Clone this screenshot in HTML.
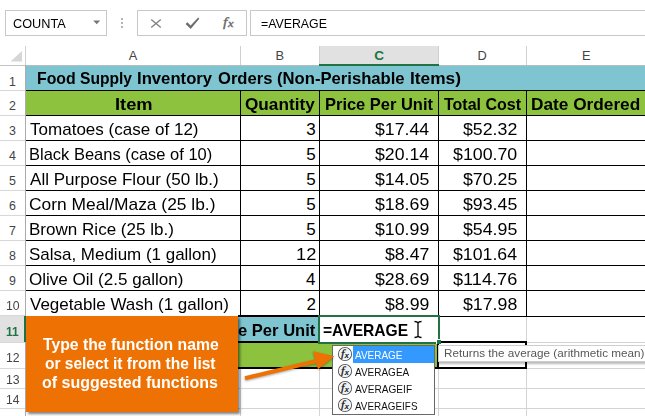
<!DOCTYPE html>
<html lang="en"><head><meta charset="utf-8"><title>Excel AVERAGE function</title>
<style>
html,body{margin:0;padding:0;background:#fff;}
body{width:645px;height:416px;position:relative;overflow:hidden;font-family:'Liberation Sans', sans-serif;}
.b{position:absolute;box-sizing:content-box;}
.t{position:absolute;white-space:nowrap;line-height:1;transform-origin:0 0;z-index:10;}
</style></head><body>
<div class="b" style="left:5px;top:10px;width:100px;height:24px;border:1px solid #C8C8C8;background:#fff"></div>
<div class="b" style="left:137px;top:10px;width:108px;height:24px;border:1px solid #C8C8C8;background:#fff"></div>
<div class="b" style="left:250px;top:10px;width:420px;height:24px;border:1px solid #C8C8C8;background:#fff"></div>
<svg class="b" style="left:92px;top:19px" width="10" height="7" viewBox="0 0 10 7"><path d="M1.2 1.5 L8.2 1.5 L4.7 5.2 Z" fill="#777"/></svg>
<div class="b" style="left:121.4px;top:18px;width:1.4px;height:1.5px;background:#B4B4B4;"></div>
<div class="b" style="left:121.4px;top:22px;width:1.4px;height:1.5px;background:#B4B4B4;"></div>
<div class="b" style="left:121.4px;top:26px;width:1.4px;height:1.5px;background:#B4B4B4;"></div>
<svg class="b" style="left:148px;top:15px" width="56" height="16" viewBox="148 15 56 16"><path d="M151.2 19.4 L160.8 27.6 M160.8 19.4 L151.2 27.6" stroke="#808080" stroke-width="1.3" fill="none"/><path d="M185.6 23.9 L187.4 22.3 L190.6 25.6 L198.2 17.6 L199.3 18.7 L190.7 28.9 Z" fill="#6e6e6e"/></svg>
<div class="b" style="left:319px;top:46px;width:120px;height:18px;background:#E1E1E1;"></div>
<div class="b" style="left:25px;top:46px;width:1px;height:19px;background:#D0D0D0;"></div>
<div class="b" style="left:240px;top:46px;width:1px;height:19px;background:#D0D0D0;"></div>
<div class="b" style="left:319px;top:46px;width:1px;height:19px;background:#D0D0D0;"></div>
<div class="b" style="left:438px;top:46px;width:1px;height:19px;background:#D0D0D0;"></div>
<div class="b" style="left:526px;top:46px;width:1px;height:19px;background:#D0D0D0;"></div>
<div class="b" style="left:0px;top:65px;width:26px;height:1px;background:#C4C4C4;"></div>
<svg class="b" style="left:10px;top:50px" width="13" height="12" viewBox="0 0 13 12"><path d="M12 1 L12 11.5 L0.5 11.5 Z" fill="#D6D6D6"/></svg>
<div class="b" style="left:25px;top:65px;width:1px;height:351px;background:#ABABAB;"></div>
<div class="b" style="left:0px;top:90px;width:25px;height:1px;background:#D8D8D8;"></div>
<div class="b" style="left:0px;top:115px;width:25px;height:1px;background:#D8D8D8;"></div>
<div class="b" style="left:0px;top:140px;width:25px;height:1px;background:#D8D8D8;"></div>
<div class="b" style="left:0px;top:165px;width:25px;height:1px;background:#D8D8D8;"></div>
<div class="b" style="left:0px;top:190px;width:25px;height:1px;background:#D8D8D8;"></div>
<div class="b" style="left:0px;top:215px;width:25px;height:1px;background:#D8D8D8;"></div>
<div class="b" style="left:0px;top:240px;width:25px;height:1px;background:#D8D8D8;"></div>
<div class="b" style="left:0px;top:265px;width:25px;height:1px;background:#D8D8D8;"></div>
<div class="b" style="left:0px;top:290px;width:25px;height:1px;background:#D8D8D8;"></div>
<div class="b" style="left:0px;top:315px;width:25px;height:1px;background:#D8D8D8;"></div>
<div class="b" style="left:0px;top:342px;width:25px;height:1px;background:#D8D8D8;"></div>
<div class="b" style="left:0px;top:368px;width:25px;height:1px;background:#D8D8D8;"></div>
<div class="b" style="left:0px;top:388px;width:25px;height:1px;background:#D8D8D8;"></div>
<div class="b" style="left:0px;top:408px;width:25px;height:1px;background:#D8D8D8;"></div>
<div class="b" style="left:0px;top:428px;width:25px;height:1px;background:#D8D8D8;"></div>
<div class="b" style="left:0px;top:316px;width:25px;height:26px;background:#E1E1E1;"></div>
<div class="b" style="left:24px;top:316px;width:2px;height:26px;background:#217346;"></div>
<div class="b" style="left:26px;top:342px;width:620px;height:1px;background:#D4D4D4;"></div>
<div class="b" style="left:26px;top:368px;width:620px;height:1px;background:#D4D4D4;"></div>
<div class="b" style="left:26px;top:388px;width:620px;height:1px;background:#D4D4D4;"></div>
<div class="b" style="left:26px;top:408px;width:620px;height:1px;background:#D4D4D4;"></div>
<div class="b" style="left:240px;top:342px;width:1px;height:80px;background:#D4D4D4;"></div>
<div class="b" style="left:319px;top:342px;width:1px;height:80px;background:#D4D4D4;"></div>
<div class="b" style="left:438px;top:342px;width:1px;height:80px;background:#D4D4D4;"></div>
<div class="b" style="left:526px;top:342px;width:1px;height:80px;background:#D4D4D4;"></div>
<div class="b" style="left:526px;top:316px;width:1px;height:100px;background:#D4D4D4;"></div>
<div class="b" style="left:26px;top:65.5px;width:620px;height:25px;background:#7EC5D1;"></div>
<div class="b" style="left:26px;top:65px;width:620px;height:1px;background:#B4BFC2;"></div>
<div class="b" style="left:26px;top:90px;width:620px;height:25px;background:#8DC23F;"></div>
<div class="b" style="left:319px;top:63.6px;width:120px;height:2.1px;background:#217346;"></div>
<div class="b" style="left:26px;top:316px;width:294px;height:26px;background:#7EC5D1;"></div>
<div class="b" style="left:26px;top:342px;width:412px;height:26px;background:#8DC23F;"></div>
<div class="b" style="left:26px;top:90px;width:620px;height:1px;background:#000;"></div>
<div class="b" style="left:26px;top:115px;width:620px;height:1px;background:#000;"></div>
<div class="b" style="left:26px;top:140px;width:620px;height:1px;background:#000;"></div>
<div class="b" style="left:26px;top:165px;width:620px;height:1px;background:#000;"></div>
<div class="b" style="left:26px;top:190px;width:620px;height:1px;background:#000;"></div>
<div class="b" style="left:26px;top:215px;width:620px;height:1px;background:#000;"></div>
<div class="b" style="left:26px;top:240px;width:620px;height:1px;background:#000;"></div>
<div class="b" style="left:26px;top:265px;width:620px;height:1px;background:#000;"></div>
<div class="b" style="left:26px;top:290px;width:620px;height:1px;background:#000;"></div>
<div class="b" style="left:319px;top:316px;width:330px;height:1px;background:#000;"></div>
<div class="b" style="left:240px;top:90px;width:1px;height:227px;background:#000;"></div>
<div class="b" style="left:319px;top:90px;width:1px;height:227px;background:#000;"></div>
<div class="b" style="left:438px;top:90px;width:1px;height:227px;background:#000;"></div>
<div class="b" style="left:526px;top:90px;width:1px;height:227px;background:#000;"></div>
<div class="b" style="left:26px;top:341px;width:293px;height:2px;background:#000;"></div>
<div class="b" style="left:26px;top:366.5px;width:413px;height:2.2px;background:#000;"></div>
<div class="b" style="left:238px;top:314.6px;width:81px;height:2.1px;background:#000;"></div>
<div class="b" style="left:437px;top:341px;width:86.3px;height:23.6px;border:2px solid #000;border-top-width:2.4px;border-bottom-width:2.3px"></div>
<div class="b" style="left:318.4px;top:315.3px;width:117.6px;height:24.3px;border:2px solid #217346;background:#fff"></div>
<div class="b" style="left:437px;top:340.3px;width:4.2px;height:4.2px;background:#217346;border-left:1px solid #fff;border-top:1px solid #fff;box-sizing:content-box;margin:-1px 0 0 -1px"></div>
<svg class="b" style="left:413px;top:320px" width="10" height="19" viewBox="0 0 10 19"><path d="M1.5 1.5 C3.5 1.5 4.6 2 5 3 C5.4 2 6.5 1.5 8.5 1.5 M5 3 L5 16 M1.5 17.5 C3.5 17.5 4.6 17 5 16 C5.4 17 6.5 17.5 8.5 17.5" stroke="#000" stroke-width="1.3" fill="none"/></svg>
<div class="b" style="left:26px;top:316px;width:212px;height:95.5px;background:#EE7203;z-index:20;box-shadow:1.5px 2px 2.5px rgba(0,0,0,.5)"></div>
<svg class="b" style="left:236px;top:340px;z-index:45;filter:drop-shadow(0.5px 1.5px 1px rgba(0,0,0,.35))" width="110" height="50" viewBox="236 340 110 50"><path d="M245.5 380.3 L244.6 376.3 L315.3 359.2 L313 351.3 L334.3 356.2 L318 369.3 L316.2 363.2 Z" fill="#EE7203"/></svg>
<div class="b" style="left:332px;top:345px;width:101px;height:68px;border:1px solid #686868;background:#fff;z-index:40"></div>
<div class="b" style="left:353px;top:346px;width:81px;height:16.6px;background:#3399FF;z-index:41;"></div>
<svg class="b" style="left:337px;top:346.3px;z-index:42" width="16" height="16" viewBox="0 0 16 16"><circle cx="8" cy="8" r="6.55" fill="#EDF1F6" stroke="#555" stroke-width="1.1"/><circle cx="8" cy="8" r="5.7" fill="none" stroke="#fff" stroke-width="0.7"/><text transform="translate(4.1 11.2) scale(1.15 1)" font-family="Liberation Serif, serif" font-style="italic" font-size="11" fill="#111" stroke="#111" stroke-width="0.2">f</text><text transform="translate(7.7 11.9) scale(1.2 1)" font-family="Liberation Serif, serif" font-style="italic" font-size="7.5" fill="#111" stroke="#111" stroke-width="0.25">x</text></svg>
<svg class="b" style="left:337px;top:363.3px;z-index:42" width="16" height="16" viewBox="0 0 16 16"><circle cx="8" cy="8" r="6.55" fill="#EDF1F6" stroke="#555" stroke-width="1.1"/><circle cx="8" cy="8" r="5.7" fill="none" stroke="#fff" stroke-width="0.7"/><text transform="translate(4.1 11.2) scale(1.15 1)" font-family="Liberation Serif, serif" font-style="italic" font-size="11" fill="#111" stroke="#111" stroke-width="0.2">f</text><text transform="translate(7.7 11.9) scale(1.2 1)" font-family="Liberation Serif, serif" font-style="italic" font-size="7.5" fill="#111" stroke="#111" stroke-width="0.25">x</text></svg>
<svg class="b" style="left:337px;top:380.3px;z-index:42" width="16" height="16" viewBox="0 0 16 16"><circle cx="8" cy="8" r="6.55" fill="#EDF1F6" stroke="#555" stroke-width="1.1"/><circle cx="8" cy="8" r="5.7" fill="none" stroke="#fff" stroke-width="0.7"/><text transform="translate(4.1 11.2) scale(1.15 1)" font-family="Liberation Serif, serif" font-style="italic" font-size="11" fill="#111" stroke="#111" stroke-width="0.2">f</text><text transform="translate(7.7 11.9) scale(1.2 1)" font-family="Liberation Serif, serif" font-style="italic" font-size="7.5" fill="#111" stroke="#111" stroke-width="0.25">x</text></svg>
<svg class="b" style="left:337px;top:397.3px;z-index:42" width="16" height="16" viewBox="0 0 16 16"><circle cx="8" cy="8" r="6.55" fill="#EDF1F6" stroke="#555" stroke-width="1.1"/><circle cx="8" cy="8" r="5.7" fill="none" stroke="#fff" stroke-width="0.7"/><text transform="translate(4.1 11.2) scale(1.15 1)" font-family="Liberation Serif, serif" font-style="italic" font-size="11" fill="#111" stroke="#111" stroke-width="0.2">f</text><text transform="translate(7.7 11.9) scale(1.2 1)" font-family="Liberation Serif, serif" font-style="italic" font-size="7.5" fill="#111" stroke="#111" stroke-width="0.25">x</text></svg>
<div class="b" style="left:438px;top:345px;width:230px;height:15px;border:1px solid #cfcfcf;background:#fff;z-index:40;box-shadow:0 1.5px 2px rgba(0,0,0,.28)"></div>
<svg class="b" style="left:218px;top:12px;z-index:5" width="22" height="22" viewBox="218 12 22 22"><text transform="translate(223.1 26.2) scale(1.18 1)" x="0" y="0" font-family="Liberation Serif, serif" font-style="italic" font-size="13.5" fill="#666" stroke="#666" stroke-width="0.3">f</text><text transform="translate(227.9 26.9) scale(1.25 1)" x="0" y="0" font-family="Liberation Serif, serif" font-style="italic" font-size="10" fill="#666" stroke="#666" stroke-width="0.3">x</text></svg>
<span class="t" style="left:12.58px;top:18.00px;font-size:12.2px;font-weight:400;color:#000;font-family:'Liberation Sans', sans-serif;transform:scaleX(1.0420)">COUNTA</span>
<span class="t" style="left:261.49px;top:18.00px;font-size:12.2px;font-weight:400;color:#000;font-family:'Liberation Sans', sans-serif;transform:scaleX(1.0117)">=AVERAGE</span>
<span class="t" style="left:128.75px;top:50.00px;font-size:12.8px;font-weight:400;color:#444;font-family:'Liberation Sans', sans-serif;transform:scaleX(1.0000)">A</span>
<span class="t" style="left:275.62px;top:50.00px;font-size:12.8px;font-weight:400;color:#444;font-family:'Liberation Sans', sans-serif;transform:scaleX(1.0000)">B</span>
<span class="t" style="left:477.62px;top:50.00px;font-size:12.8px;font-weight:400;color:#444;font-family:'Liberation Sans', sans-serif;transform:scaleX(1.0000)">D</span>
<span class="t" style="left:582.00px;top:50.00px;font-size:12.8px;font-weight:400;color:#444;font-family:'Liberation Sans', sans-serif;transform:scaleX(1.0000)">E</span>
<span class="t" style="left:374.15px;top:49.00px;font-size:13.6px;font-weight:700;color:#217346;font-family:'Liberation Sans', sans-serif;transform:scaleX(1.0000)">C</span>
<span class="t" style="left:8.88px;top:76.00px;font-size:12.4px;font-weight:400;color:#444;font-family:'Liberation Sans', sans-serif;transform:scaleX(1.0000)">1</span>
<span class="t" style="left:9.12px;top:100.00px;font-size:12.4px;font-weight:400;color:#444;font-family:'Liberation Sans', sans-serif;transform:scaleX(1.0000)">2</span>
<span class="t" style="left:9.12px;top:125.00px;font-size:12.4px;font-weight:400;color:#444;font-family:'Liberation Sans', sans-serif;transform:scaleX(1.0000)">3</span>
<span class="t" style="left:9.12px;top:150.00px;font-size:12.4px;font-weight:400;color:#444;font-family:'Liberation Sans', sans-serif;transform:scaleX(1.0000)">4</span>
<span class="t" style="left:9.00px;top:175.00px;font-size:12.4px;font-weight:400;color:#444;font-family:'Liberation Sans', sans-serif;transform:scaleX(1.0000)">5</span>
<span class="t" style="left:9.12px;top:200.00px;font-size:12.4px;font-weight:400;color:#444;font-family:'Liberation Sans', sans-serif;transform:scaleX(1.0000)">6</span>
<span class="t" style="left:9.12px;top:225.00px;font-size:12.4px;font-weight:400;color:#444;font-family:'Liberation Sans', sans-serif;transform:scaleX(1.0000)">7</span>
<span class="t" style="left:9.12px;top:250.00px;font-size:12.4px;font-weight:400;color:#444;font-family:'Liberation Sans', sans-serif;transform:scaleX(1.0000)">8</span>
<span class="t" style="left:9.12px;top:275.00px;font-size:12.4px;font-weight:400;color:#444;font-family:'Liberation Sans', sans-serif;transform:scaleX(1.0000)">9</span>
<span class="t" style="left:6.01px;top:300.00px;font-size:12.4px;font-weight:400;color:#444;font-family:'Liberation Sans', sans-serif;transform:scaleX(0.9878)">10</span>
<span class="t" style="left:6.21px;top:325.00px;font-size:13px;font-weight:700;color:#217346;font-family:'Liberation Sans', sans-serif;transform:scaleX(0.9255)">11</span>
<span class="t" style="left:6.01px;top:352.00px;font-size:12.4px;font-weight:400;color:#444;font-family:'Liberation Sans', sans-serif;transform:scaleX(0.9878)">12</span>
<span class="t" style="left:6.01px;top:374.00px;font-size:12.4px;font-weight:400;color:#444;font-family:'Liberation Sans', sans-serif;transform:scaleX(0.9878)">13</span>
<span class="t" style="left:6.03px;top:394.00px;font-size:12.4px;font-weight:400;color:#444;font-family:'Liberation Sans', sans-serif;transform:scaleX(0.9680)">14</span>
<span class="t" style="left:36.87px;top:70.00px;font-size:17px;font-weight:700;color:#000;font-family:'Liberation Sans', sans-serif;transform:scaleX(0.9329)">Food</span>
<span class="t" style="left:80.14px;top:70.00px;font-size:17px;font-weight:700;color:#000;font-family:'Liberation Sans', sans-serif;transform:scaleX(0.9170)">Supply</span>
<span class="t" style="left:136.82px;top:70.00px;font-size:17px;font-weight:700;color:#000;font-family:'Liberation Sans', sans-serif;transform:scaleX(0.9815)">Inventory</span>
<span class="t" style="left:218.17px;top:70.00px;font-size:17px;font-weight:700;color:#000;font-family:'Liberation Sans', sans-serif;transform:scaleX(0.9751)">Orders</span>
<span class="t" style="left:277.17px;top:70.00px;font-size:17px;font-weight:700;color:#000;font-family:'Liberation Sans', sans-serif;transform:scaleX(0.9791)">(Non-Perishable</span>
<span class="t" style="left:410.28px;top:70.00px;font-size:17px;font-weight:700;color:#000;font-family:'Liberation Sans', sans-serif;transform:scaleX(1.0176)">Items)</span>
<span class="t" style="left:114.67px;top:96.00px;font-size:17px;font-weight:700;color:#000;font-family:'Liberation Sans', sans-serif;transform:scaleX(1.0758)">Item</span>
<span class="t" style="left:244.99px;top:96.00px;font-size:17px;font-weight:700;color:#000;font-family:'Liberation Sans', sans-serif;transform:scaleX(1.0110)">Quantity</span>
<span class="t" style="left:324.78px;top:96.00px;font-size:17px;font-weight:700;color:#000;font-family:'Liberation Sans', sans-serif;transform:scaleX(0.9683)">Price Per Unit</span>
<span class="t" style="left:443.51px;top:96.00px;font-size:17px;font-weight:700;color:#000;font-family:'Liberation Sans', sans-serif;transform:scaleX(0.9417)">Total Cost</span>
<span class="t" style="left:531.49px;top:96.00px;font-size:17px;font-weight:700;color:#000;font-family:'Liberation Sans', sans-serif;transform:scaleX(1.0142)">Date Ordered</span>
<span class="t" style="left:29.65px;top:121.00px;font-size:17px;font-weight:400;color:#000;font-family:'Liberation Sans', sans-serif;transform:scaleX(1.0021)">Tomatoes (case of 12)</span>
<span class="t" style="left:306.25px;top:121.00px;font-size:17px;font-weight:400;color:#000;font-family:'Liberation Sans', sans-serif;transform:scaleX(1.0000)">3</span>
<span class="t" style="left:374.74px;top:121.00px;font-size:17px;font-weight:400;color:#000;font-family:'Liberation Sans', sans-serif;transform:scaleX(1.0390)">$17.44</span>
<span class="t" style="left:462.74px;top:121.00px;font-size:17px;font-weight:400;color:#000;font-family:'Liberation Sans', sans-serif;transform:scaleX(1.0441)">$52.32</span>
<span class="t" style="left:28.69px;top:146.00px;font-size:17px;font-weight:400;color:#000;font-family:'Liberation Sans', sans-serif;transform:scaleX(0.9697)">Black Beans (case of 10)</span>
<span class="t" style="left:306.25px;top:146.00px;font-size:17px;font-weight:400;color:#000;font-family:'Liberation Sans', sans-serif;transform:scaleX(1.0000)">5</span>
<span class="t" style="left:374.74px;top:146.00px;font-size:17px;font-weight:400;color:#000;font-family:'Liberation Sans', sans-serif;transform:scaleX(1.0390)">$20.14</span>
<span class="t" style="left:452.74px;top:146.00px;font-size:17px;font-weight:400;color:#000;font-family:'Liberation Sans', sans-serif;transform:scaleX(1.0455)">$100.70</span>
<span class="t" style="left:29.90px;top:171.00px;font-size:17px;font-weight:400;color:#000;font-family:'Liberation Sans', sans-serif;transform:scaleX(1.0032)">All Purpose Flour (50 lb.)</span>
<span class="t" style="left:306.25px;top:171.00px;font-size:17px;font-weight:400;color:#000;font-family:'Liberation Sans', sans-serif;transform:scaleX(1.0000)">5</span>
<span class="t" style="left:374.74px;top:171.00px;font-size:17px;font-weight:400;color:#000;font-family:'Liberation Sans', sans-serif;transform:scaleX(1.0441)">$14.05</span>
<span class="t" style="left:462.74px;top:171.00px;font-size:17px;font-weight:400;color:#000;font-family:'Liberation Sans', sans-serif;transform:scaleX(1.0441)">$70.25</span>
<span class="t" style="left:29.13px;top:196.00px;font-size:17px;font-weight:400;color:#000;font-family:'Liberation Sans', sans-serif;transform:scaleX(1.0227)">Corn Meal/Maza (25 lb.)</span>
<span class="t" style="left:306.25px;top:196.00px;font-size:17px;font-weight:400;color:#000;font-family:'Liberation Sans', sans-serif;transform:scaleX(1.0000)">5</span>
<span class="t" style="left:374.74px;top:196.00px;font-size:17px;font-weight:400;color:#000;font-family:'Liberation Sans', sans-serif;transform:scaleX(1.0441)">$18.69</span>
<span class="t" style="left:462.74px;top:196.00px;font-size:17px;font-weight:400;color:#000;font-family:'Liberation Sans', sans-serif;transform:scaleX(1.0441)">$93.45</span>
<span class="t" style="left:28.65px;top:221.00px;font-size:17px;font-weight:400;color:#000;font-family:'Liberation Sans', sans-serif;transform:scaleX(1.0025)">Brown Rice (25 lb.)</span>
<span class="t" style="left:306.25px;top:221.00px;font-size:17px;font-weight:400;color:#000;font-family:'Liberation Sans', sans-serif;transform:scaleX(1.0000)">5</span>
<span class="t" style="left:374.74px;top:221.00px;font-size:17px;font-weight:400;color:#000;font-family:'Liberation Sans', sans-serif;transform:scaleX(1.0441)">$10.99</span>
<span class="t" style="left:462.74px;top:221.00px;font-size:17px;font-weight:400;color:#000;font-family:'Liberation Sans', sans-serif;transform:scaleX(1.0441)">$54.95</span>
<span class="t" style="left:29.15px;top:246.00px;font-size:17px;font-weight:400;color:#000;font-family:'Liberation Sans', sans-serif;transform:scaleX(0.9979)">Salsa, Medium (1 gallon)</span>
<span class="t" style="left:295.66px;top:246.00px;font-size:17px;font-weight:400;color:#000;font-family:'Liberation Sans', sans-serif;transform:scaleX(1.0746)">12</span>
<span class="t" style="left:384.74px;top:246.00px;font-size:17px;font-weight:400;color:#000;font-family:'Liberation Sans', sans-serif;transform:scaleX(1.0422)">$8.47</span>
<span class="t" style="left:452.74px;top:246.00px;font-size:17px;font-weight:400;color:#000;font-family:'Liberation Sans', sans-serif;transform:scaleX(1.0412)">$101.64</span>
<span class="t" style="left:29.15px;top:271.00px;font-size:17px;font-weight:400;color:#000;font-family:'Liberation Sans', sans-serif;transform:scaleX(1.0023)">Olive Oil (2.5 gallon)</span>
<span class="t" style="left:305.88px;top:271.00px;font-size:17px;font-weight:400;color:#000;font-family:'Liberation Sans', sans-serif;transform:scaleX(1.0000)">4</span>
<span class="t" style="left:374.74px;top:271.00px;font-size:17px;font-weight:400;color:#000;font-family:'Liberation Sans', sans-serif;transform:scaleX(1.0441)">$28.69</span>
<span class="t" style="left:452.73px;top:271.00px;font-size:17px;font-weight:400;color:#000;font-family:'Liberation Sans', sans-serif;transform:scaleX(1.0675)">$114.76</span>
<span class="t" style="left:29.65px;top:296.00px;font-size:17px;font-weight:400;color:#000;font-family:'Liberation Sans', sans-serif;transform:scaleX(1.0005)">Vegetable Wash (1 gallon)</span>
<span class="t" style="left:306.38px;top:296.00px;font-size:17px;font-weight:400;color:#000;font-family:'Liberation Sans', sans-serif;transform:scaleX(1.0000)">2</span>
<span class="t" style="left:384.74px;top:296.00px;font-size:17px;font-weight:400;color:#000;font-family:'Liberation Sans', sans-serif;transform:scaleX(1.0422)">$8.99</span>
<span class="t" style="left:462.74px;top:296.00px;font-size:17px;font-weight:400;color:#000;font-family:'Liberation Sans', sans-serif;transform:scaleX(1.0441)">$17.98</span>
<span class="t" style="left:237.77px;top:322.00px;font-size:17px;font-weight:700;color:#000;font-family:'Liberation Sans', sans-serif;transform:scaleX(0.9745)">e Per Unit</span>
<span class="t" style="left:323.06px;top:322.00px;font-size:17px;font-weight:700;color:#000;font-family:'Liberation Sans', sans-serif;transform:scaleX(0.9178)">=AVERAGE</span>
<span class="t" style="left:42.95px;top:337.00px;font-size:16px;font-weight:700;color:#fff;font-family:'Liberation Sans', sans-serif;z-index:30;transform:scaleX(0.9848)">Type the function name</span>
<span class="t" style="left:45.22px;top:356.00px;font-size:16px;font-weight:700;color:#fff;font-family:'Liberation Sans', sans-serif;z-index:30;transform:scaleX(0.9683)">or select it from the list</span>
<span class="t" style="left:41.50px;top:375.00px;font-size:16px;font-weight:700;color:#fff;font-family:'Liberation Sans', sans-serif;z-index:30;transform:scaleX(0.9994)">of suggested functions</span>
<span class="t" style="left:355.40px;top:350.00px;font-size:10.8px;font-weight:400;color:#fff;font-family:'Liberation Sans', sans-serif;z-index:42;transform:scaleX(0.9235)">AVERAGE</span>
<span class="t" style="left:355.40px;top:367.00px;font-size:10.8px;font-weight:400;color:#111;font-family:'Liberation Sans', sans-serif;z-index:42;transform:scaleX(0.9248)">AVERAGEA</span>
<span class="t" style="left:355.40px;top:384.00px;font-size:10.8px;font-weight:400;color:#111;font-family:'Liberation Sans', sans-serif;z-index:42;transform:scaleX(0.9355)">AVERAGEIF</span>
<span class="t" style="left:355.40px;top:401.00px;font-size:10.8px;font-weight:400;color:#111;font-family:'Liberation Sans', sans-serif;z-index:42;transform:scaleX(0.9166)">AVERAGEIFS</span>
<span class="t" style="left:443.79px;top:347.00px;font-size:11.6px;font-weight:400;color:#575757;font-family:'Liberation Sans', sans-serif;z-index:42;transform:scaleX(1.0099)">Returns the average (arithmetic mean)</span>
</body></html>
